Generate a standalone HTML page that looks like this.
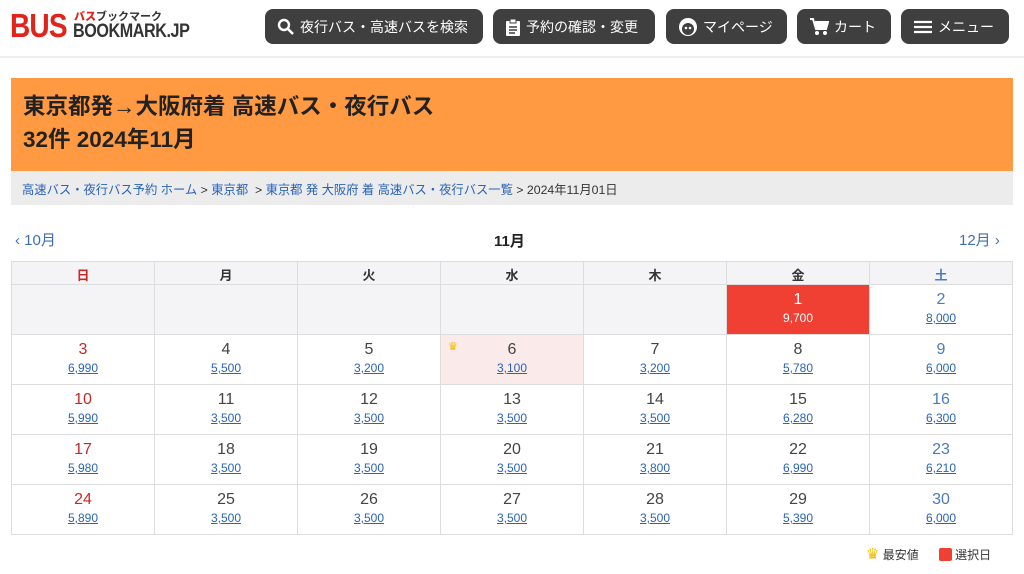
<!DOCTYPE html>
<html><head><meta charset="utf-8"><style>
*{box-sizing:border-box;margin:0;padding:0}
body{width:1024px;height:574px;overflow:hidden;background:#fff;font-family:"Liberation Sans","Noto Sans CJK JP",sans-serif;color:#333}
.hdr{height:58px;border-bottom:2px solid #eee;position:relative}
.logo{position:absolute;left:10px;top:9px}
.bus{position:absolute;left:0;top:0;font-size:33px;font-weight:bold;color:#e2231a;letter-spacing:-1px;line-height:34px;transform:scaleX(0.85);transform-origin:left}
.kana{position:absolute;left:64px;top:2px;font-size:11px;font-weight:bold;color:#333;white-space:nowrap;line-height:12px}
.kana b{color:#e2231a}
.bm{position:absolute;left:63px;top:13px;font-size:19px;font-weight:bold;color:#333;white-space:nowrap;line-height:20px;letter-spacing:-0.5px;transform:scaleX(0.85);transform-origin:left}
.btn{position:absolute;top:9px;height:35px;background:#3f3f3f;border-radius:8px;color:#fff;font-size:14px;display:flex;align-items:center;padding-left:12px;white-space:nowrap}
.btn svg{margin-right:5px}
.ban{position:absolute;left:11px;top:78px;width:1002px;height:93px;background:#ff9a42;padding:12px 0 0 12px;font-size:22.5px;font-weight:bold;color:#222;line-height:33px;white-space:nowrap}
.bc{position:absolute;left:11px;top:171px;width:1002px;height:34px;background:#ececec;font-size:12.3px;padding:9px 0 0 11px;color:#333;white-space:nowrap}
.bc a{color:#2a63b8;text-decoration:none}
.nav{position:absolute;top:229px;font-size:15px;color:#3c6fb3}
table{position:absolute;left:11px;top:261px;border-collapse:collapse;width:1002px}
td{border:1px solid #ddd;width:143px;text-align:center;vertical-align:top}
tr.h td{height:23px;background:#f4f4f6;font-size:13px;font-weight:bold;padding-top:3px}
tr.d td{height:50px;font-size:16px;padding-top:5px;line-height:20px;color:#444}
td u{display:block;font-size:12px;color:#2a63b8;line-height:16px}
.e{background:#f4f4f6}
tr td.sun{color:#c62828}tr td.sat{color:#4a7cc0}
tr td.sel{background:#f04034;color:#fff}.sel u{color:#fff;text-decoration:none}
.low{background:#fbeaea;position:relative}
</style></head><body>
<div class="hdr">
 <div class="logo"><div class="bus">BUS</div><div class="kana"><b>バス</b>ブックマーク</div><div class="bm">BOOKMARK.JP</div></div>
 <div class="btn" style="left:265px;width:218px"><svg width="18" height="18" viewBox="0 0 18 18"><circle cx="7" cy="7" r="5" fill="none" stroke="#fff" stroke-width="2.4"/><path d="M11 11l5 5" stroke="#fff" stroke-width="2.6"/></svg>夜行バス・高速バスを検索</div>
 <div class="btn" style="left:493px;width:162px"><svg width="16" height="18" viewBox="0 0 16 18"><rect x="1" y="3" width="14" height="15" rx="1" fill="#fff"/><rect x="5" y="1" width="6" height="4" fill="#fff" stroke="#3f3f3f"/><path d="M4 9h8M4 12h8M4 15h6" stroke="#3f3f3f" stroke-width="1.5"/></svg>予約の確認・変更</div>
 <div class="btn" style="left:666px;width:121px"><svg width="20" height="20" viewBox="0 0 20 20"><circle cx="10" cy="10" r="9" fill="#fff"/><circle cx="10" cy="12" r="6" fill="#3f3f3f"/><circle cx="8" cy="11" r="1.3" fill="#fff"/><circle cx="12" cy="11" r="1.3" fill="#fff"/></svg>マイページ</div>
 <div class="btn" style="left:797px;width:94px"><svg width="20" height="20" viewBox="0 0 20 20"><path d="M1 2h3l3 10h10l2-7H6" fill="none" stroke="#fff" stroke-width="2"/><rect x="6" y="5" width="12" height="6" fill="#fff"/><circle cx="8" cy="16" r="2" fill="#fff"/><circle cx="16" cy="16" r="2" fill="#fff"/></svg>カート</div>
 <div class="btn" style="left:901px;width:108px"><svg width="20" height="16" viewBox="0 0 20 16"><path d="M1 3h18M1 8h18M1 13h18" stroke="#fff" stroke-width="2.2"/></svg>メニュー</div>
</div>
<div class="ban">東京都発→大阪府着 高速バス・夜行バス<br>32件 2024年11月</div>
<div class="bc"><a>高速バス・夜行バス予約 ホーム</a> &gt; <a>東京都</a> &nbsp;&gt; <a>東京都 発 大阪府 着 高速バス・夜行バス一覧</a> &gt; 2024年11月01日</div>
<div class="nav" style="left:15px">‹ 10月</div>
<div style="position:absolute;left:494px;top:230px;font-size:15px;font-weight:bold;color:#222">11月</div>
<div class="nav" style="left:959px">12月 ›</div>
<table>
<tr class="h"><td class="sun">日</td><td>月</td><td>火</td><td>水</td><td>木</td><td>金</td><td class="sat">土</td></tr>
<tr class="d"><td class="e"></td><td class="e"></td><td class="e"></td><td class="e"></td><td class="e"></td><td class="sel">1<u>9,700</u></td><td class="sat">2<u>8,000</u></td></tr>
<tr class="d"><td class="sun">3<u>6,990</u></td><td>4<u>5,500</u></td><td>5<u>3,200</u></td><td class="low"><span style="position:absolute;left:7px;top:2px;font-size:11px;color:#f5b800">♛</span>6<u>3,100</u></td><td>7<u>3,200</u></td><td>8<u>5,780</u></td><td class="sat">9<u>6,000</u></td></tr>
<tr class="d"><td class="sun">10<u>5,990</u></td><td>11<u>3,500</u></td><td>12<u>3,500</u></td><td>13<u>3,500</u></td><td>14<u>3,500</u></td><td>15<u>6,280</u></td><td class="sat">16<u>6,300</u></td></tr>
<tr class="d"><td class="sun">17<u>5,980</u></td><td>18<u>3,500</u></td><td>19<u>3,500</u></td><td>20<u>3,500</u></td><td>21<u>3,800</u></td><td>22<u>6,990</u></td><td class="sat">23<u>6,210</u></td></tr>
<tr class="d"><td class="sun">24<u>5,890</u></td><td>25<u>3,500</u></td><td>26<u>3,500</u></td><td>27<u>3,500</u></td><td>28<u>3,500</u></td><td>29<u>5,390</u></td><td class="sat">30<u>6,000</u></td></tr>
</table>
<div style="position:absolute;left:866px;top:545px;font-size:12px;color:#333;white-space:nowrap"><span style="color:#f5b800;font-size:15px">♛</span> 最安値 &nbsp; &nbsp; &nbsp;<span style="display:inline-block;width:13px;height:13px;background:#f04034;border-radius:2px;vertical-align:-2px"></span> 選択日</div>
</body></html>
